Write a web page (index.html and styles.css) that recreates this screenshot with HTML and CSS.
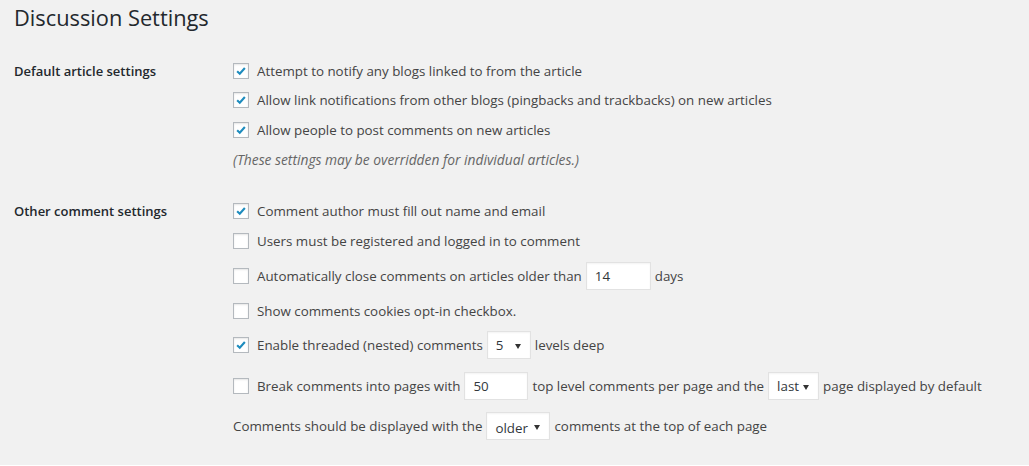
FILE: index.html
```html
<!DOCTYPE html>
<html lang="en">
<head>
<meta charset="utf-8">
<title>Discussion Settings</title>
<link rel="stylesheet" href="styles.css">
</head>
<body>
<div class="wrap">
  <h1 class="title">Discussion Settings</h1>

  <section class="setting setting--first">
    <div class="setting__label">Default article settings</div>
    <div class="setting__body">
      <label class="row"><span class="cb cb--on"><svg viewBox="0 0 16 16" class="tick"><path d="M3.6 8.3 L6.6 11.2 L12.4 4.6"/></svg></span>Attempt to notify any blogs linked to from the article</label>
      <label class="row"><span class="cb cb--on"><svg viewBox="0 0 16 16" class="tick"><path d="M3.6 8.3 L6.6 11.2 L12.4 4.6"/></svg></span>Allow link notifications from other blogs (pingbacks and trackbacks) on new articles</label>
      <label class="row"><span class="cb cb--on"><svg viewBox="0 0 16 16" class="tick"><path d="M3.6 8.3 L6.6 11.2 L12.4 4.6"/></svg></span>Allow people to post comments on new articles</label>
      <p class="row note">(These settings may be overridden for individual articles.)</p>
    </div>
  </section>

  <section class="setting setting--second">
    <div class="setting__label">Other comment settings</div>
    <div class="setting__body">
      <label class="row"><span class="cb cb--on"><svg viewBox="0 0 16 16" class="tick"><path d="M3.6 8.3 L6.6 11.2 L12.4 4.6"/></svg></span>Comment author must fill out name and email</label>
      <label class="row"><span class="cb"></span>Users must be registered and logged in to comment</label>
      <label class="row row--input"><span class="cb"></span>Automatically close comments on articles older than <span class="field field--days">14</span> days</label>
      <label class="row"><span class="cb"></span>Show comments cookies opt-in checkbox.</label>
      <label class="row row--select"><span class="cb cb--on"><svg viewBox="0 0 16 16" class="tick"><path d="M3.6 8.3 L6.6 11.2 L12.4 4.6"/></svg></span>Enable threaded (nested) comments <span class="select select--levels">5</span> levels deep</label>
      <label class="row row--pages"><span class="cb"></span>Break comments into pages with <span class="field field--pages">50</span> top level comments per page and the <span class="select select--last">last</span> page displayed by default</label>
      <div class="row row--order">Comments should be displayed with the <span class="select select--order">older</span> comments at the top of each page</div>
    </div>
  </section>
</div>
</body>
</html>
```

FILE: styles.css
```css
html, body {
  margin: 0;
  padding: 0;
  height: 100%;
}
body {
  background: #f1f1f1;
  font-family: "Open Sans", "Noto Sans", sans-serif;
  color: #444;
  font-size: 13.35px;
  border-bottom: 1px solid #fff;
  box-sizing: border-box;
}
.wrap {
  padding: 0 0 0 14px;
}
.title {
  margin: 0;
  padding-top: 3px;
  font-size: 21.8px;
  line-height: 30px;
  font-weight: 400;
  color: #23282d;
}
.setting {
  display: grid;
  grid-template-columns: 219px 1fr;
}
.setting--first {
  margin-top: 23px;
}
.setting--second {
  margin-top: 22px;
}
.setting__label {
  font-weight: 600;
  color: #23282d;
  font-size: 13px;
  line-height: 30px;
}
.setting__body {
  display: flex;
  flex-direction: column;
}
.row {
  display: flex;
  align-items: center;
  height: 29.5px;
  margin: 0;
  white-space: nowrap;
}
.setting--second .row { height: 30px; }
.setting--second .row--input { height: 40px; }
.setting--second .row--select { height: 38px; }
.setting--second .row--pages { height: 44px; }
.setting--second .row--order { height: 36px; }
.note {
  font-style: italic;
  color: #666;
  font-size: 13.8px;
}
.cb {
  box-sizing: border-box;
  width: 16px;
  height: 16px;
  border: 1px solid #b4b9be;
  background: #fff;
  box-shadow: inset 0 1px 2px rgba(0,0,0,.1);
  margin-right: 8px;
  flex: none;
  display: flex;
  align-items: center;
  justify-content: center;
}
.tick {
  width: 14px;
  height: 14px;
  fill: none;
  stroke: #1e8cbe;
  stroke-width: 2.4;
}
.field, .select {
  box-sizing: border-box;
  display: inline-flex;
  align-items: center;
  height: 28px;
  background: #fff;
  border: 1px solid #e2e2e2;
  box-shadow: inset 0 1px 2px rgba(0,0,0,.05);
  color: #32373c;
  padding-left: 8px;
  margin: 0 4px;
  flex: none;
}
.field--days { width: 65px; }
.field--pages { width: 64px; }
.select {
  position: relative;
  padding-right: 0;
}
.select::after {
  content: "";
  position: absolute;
  right: 9px;
  top: 12px;
  border-left: 3px solid transparent;
  border-right: 3px solid transparent;
  border-top: 5px solid #333;
}
.select--levels { width: 44px; }
.select--last { width: 51px; }
.select--order { width: 64px; padding-top: 3px; }
```
